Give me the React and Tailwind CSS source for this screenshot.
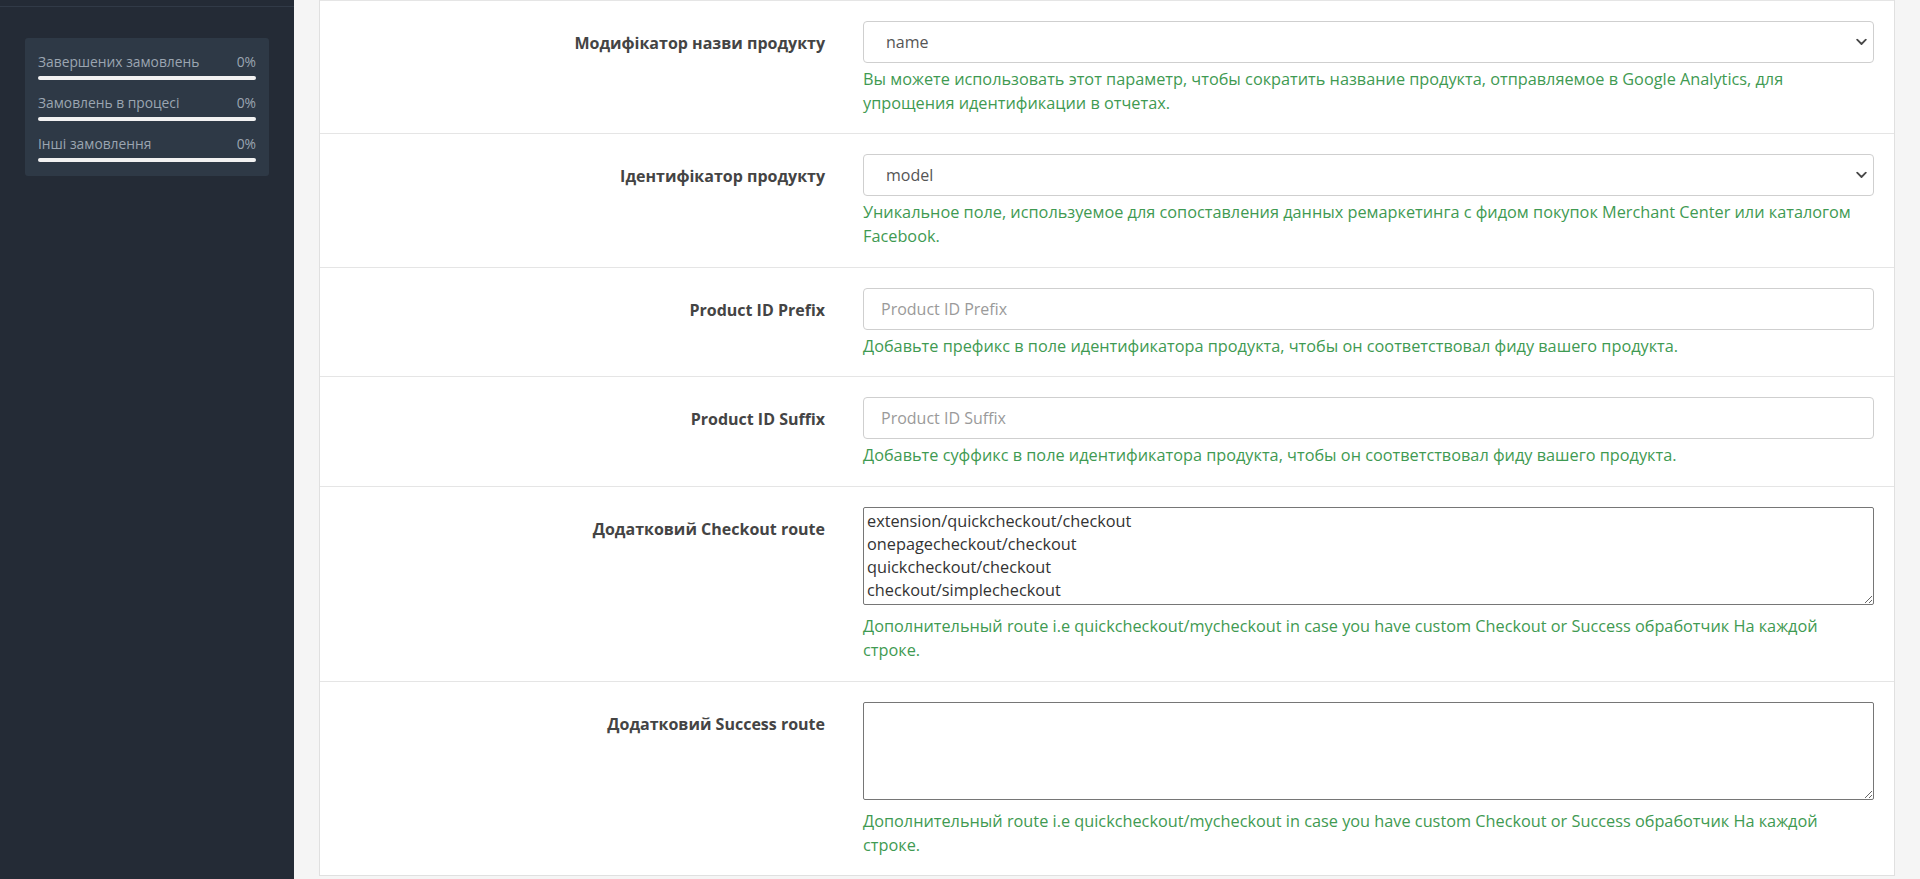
import { useState } from "react";

const stats = [
  { label: "Завершених замовлень", value: "0%" },
  { label: "Замовлень в процесі", value: "0%" },
  { label: "Інші замовлення", value: "0%" },
];

const helpRoute =
  "Дополнительный route i.e quickcheckout/mycheckout in case you have custom Checkout or Success обработчик На каждой строке.";

function Chevron() {
  return (
    <svg className="pointer-events-none absolute right-[7px] top-1/2 -translate-y-1/2" width="11" height="7" viewBox="0 0 11 7" fill="none">
      <path d="M1.2 1.2 5.5 5.5l4.3-4.3" stroke="#4a4a4a" strokeWidth="1.8" strokeLinecap="round" strokeLinejoin="round" />
    </svg>
  );
}

function Row({ label, children, help, area, first }) {
  return (
    <div className={`flex border-t border-[#e5e5e5] pt-[20px] ${first ? "pb-[17px]" : "pb-[18px]"}`}>
      <div className="w-[543px] shrink-0 pr-[38px] pt-[10px] text-right text-[16px] font-bold leading-[24px] text-[#444]">{label}</div>
      <div className="min-w-0 flex-1 pr-[20px]">
        {children}
        <p className={`${area ? "mt-[9px]" : "mt-[4px]"} text-[16.3px] leading-[1.5] text-[#3f9a52]`}>{help}</p>
      </div>
    </div>
  );
}

function Select({ value, options }) {
  const [val, setVal] = useState(value);
  return (
    <div className="relative">
      <select
        value={val}
        onChange={(e) => setVal(e.target.value)}
        className="block h-[42px] w-full appearance-none rounded-[4px] border border-[#cfcfcf] bg-white pl-[22px] text-[16px] text-[#555] outline-none"
      >
        {options.map((o) => (
          <option key={o}>{o}</option>
        ))}
      </select>
      <Chevron />
    </div>
  );
}

function Input({ placeholder }) {
  return (
    <input
      placeholder={placeholder}
      className="block h-[42px] w-full rounded-[4px] border border-[#cfcfcf] bg-white pl-[17px] text-[16px] text-[#555] outline-none placeholder:text-[#9a9a9a]"
    />
  );
}

function Area({ value }) {
  return (
    <textarea
      defaultValue={value}
      className="block h-[98px] w-full rounded-[2px] border border-[#767676] bg-white px-[3px] py-[2px] text-[16.3px] leading-[23px] text-[#333] outline-none"
    />
  );
}

export default function App() {
  return (
    <div className="flex min-h-screen bg-[#f5f5f5]" style={{ fontFamily: "'Open Sans', sans-serif" }}>
      <aside className="w-[294px] shrink-0 bg-[#242b36]">
        <div className="h-[7px] border-b border-[#313a47]" />
        <div className="mx-[25px] mt-[31px] rounded-[3px] bg-[#2e3946] px-[13px] pt-[15px] pb-[14px]">
          {stats.map((s, i) => (
            <div key={s.label} className={i < stats.length - 1 ? "mb-[14px]" : ""}>
              <div className="flex justify-between text-[13.8px] leading-[18px] text-[#9ba5b1]">
                <span>{s.label}</span>
                <span>{s.value}</span>
              </div>
              <div className="mt-[5px] h-[4px] rounded-full bg-[#f2f2f2]" />
            </div>
          ))}
        </div>
      </aside>

      <main className="flex-1 px-[25px]">
        <div className="border-x border-b border-[#e0e0e0] bg-white">
          <Row first label="Модифікатор назви продукту" help="Вы можете использовать этот параметр, чтобы сократить название продукта, отправляемое в Google Analytics, для упрощения идентификации в отчетах.">
            <Select value="name" options={["name", "model", "sku"]} />
          </Row>
          <Row label="Ідентифікатор продукту" help="Уникальное поле, используемое для сопоставления данных ремаркетинга с фидом покупок Merchant Center или каталогом Facebook.">
            <Select value="model" options={["model", "product_id", "sku"]} />
          </Row>
          <Row label="Product ID Prefix" help="Добавьте префикс в поле идентификатора продукта, чтобы он соответствовал фиду вашего продукта.">
            <Input placeholder="Product ID Prefix" />
          </Row>
          <Row label="Product ID Suffix" help="Добавьте суффикс в поле идентификатора продукта, чтобы он соответствовал фиду вашего продукта.">
            <Input placeholder="Product ID Suffix" />
          </Row>
          <Row label="Додатковий Checkout route" help={helpRoute} area>
            <Area value={"extension/quickcheckout/checkout\nonepagecheckout/checkout\nquickcheckout/checkout\ncheckout/simplecheckout"} />
          </Row>
          <Row label="Додатковий Success route" help={helpRoute} area>
            <Area value="" />
          </Row>
        </div>
      </main>
    </div>
  );
}
